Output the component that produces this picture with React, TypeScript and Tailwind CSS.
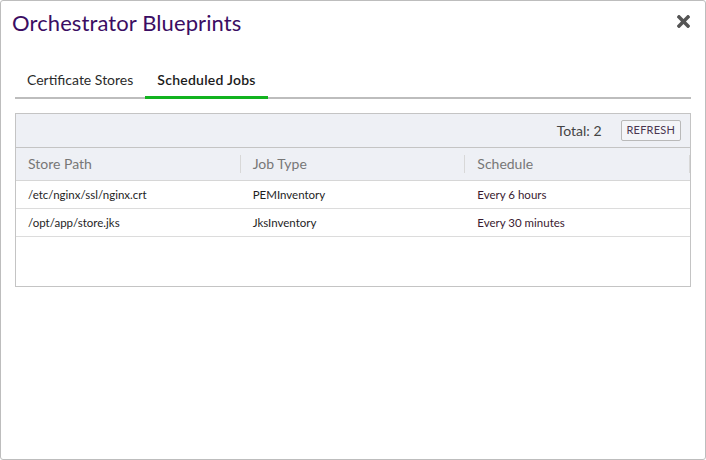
import { FaTimes } from "react-icons/fa";

const jobs = [
  { path: "/etc/nginx/ssl/nginx.crt", type: "PEMInventory", schedule: "Every 6 hours" },
  { path: "/opt/app/store.jks", type: "JksInventory", schedule: "Every 30 minutes" },
];

const App = () => {
  return (
    <div
      className="w-[706px] h-[460px] bg-white"
      style={{ fontFamily: "Lato, 'Open Sans', sans-serif" }}
    >
      <div className="h-full border border-[#bdbdbd] rounded-[3px] flex flex-col">
        {/* Header */}
        <div className="flex items-start justify-between pl-[11px] pr-[12px] pt-[8px]">
          <h1 className="text-[22px] leading-[28px] text-[#3b0d63] tracking-[0.1px]">
            Orchestrator Blueprints
          </h1>
          <button className="mt-[3px] text-[#555] text-[19px]">
            <FaTimes />
          </button>
        </div>

        {/* Tabs */}
        <div className="mx-[14px] mt-[33px] flex border-b-2 border-[#bdbdbd] text-[14px] leading-[20px]">
          <div className="px-[12px] pb-[7px] text-[#2b2b2b]">Certificate Stores</div>
          <div className="px-[12px] pb-[5px] -mb-[2px] border-b-[3px] border-[#12b31f] text-[#1b1b1b] font-semibold tracking-[0.25px]">
            Scheduled Jobs
          </div>
        </div>

        {/* Table */}
        <div className="mx-[14px] mt-[14px] h-[174px] border border-[#c4c4c4] flex flex-col">
          <div className="h-[34px] bg-[#eef0f5] border-b border-[#c4c4c4] flex items-center justify-end pr-[9px] gap-[19px]">
            <span className="text-[14px] text-[#444]">Total: 2</span>
            <button className="h-[21px] px-[5px] border border-[#b9b9b9] rounded-[2px] bg-[#f4f5f8] text-[11px] text-[#4a3650] tracking-[0.2px]">
              REFRESH
            </button>
          </div>
          <div className="h-[33px] bg-[#eef0f5] border-b border-[#d6d6d6] grid grid-cols-3 items-center text-[14px] text-[#777]">
            <div className="pl-[12px] border-r border-[#d8d8d8] h-[18px] leading-[18px]">Store Path</div>
            <div className="pl-[12px] border-r border-[#d8d8d8] h-[18px] leading-[18px]">Job Type</div>
            <div className="pl-[12px] border-r border-[#d8d8d8] h-[18px] leading-[18px]">Schedule</div>
          </div>
          {jobs.map((job) => (
            <div
              key={job.path}
              className="h-[28px] border-b border-[#dcdcdc] grid grid-cols-3 items-center text-[11.5px] text-[#1e1e1e]"
            >
              <div className="pl-[12px]">{job.path}</div>
              <div className="pl-[12px]">{job.type}</div>
              <div className="pl-[12px] text-[#3a1a30]">{job.schedule}</div>
            </div>
          ))}
        </div>
      </div>
    </div>
  );
};

export default App;
